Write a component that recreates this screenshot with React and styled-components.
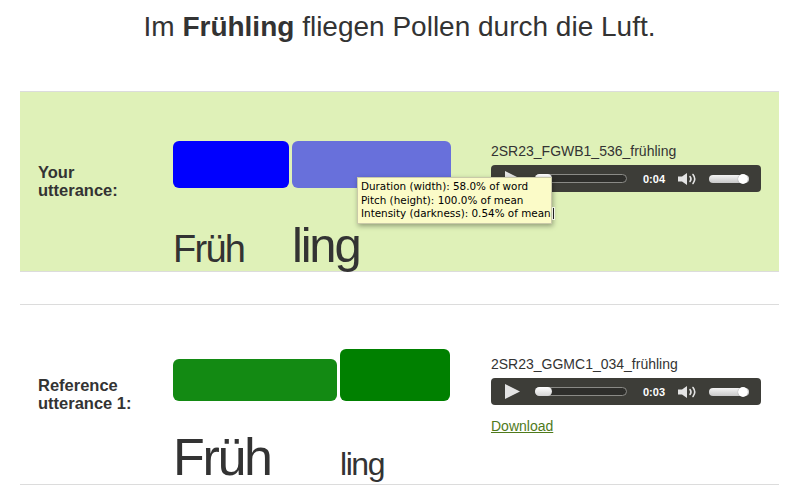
import React from "react";
import styled, { createGlobalStyle } from "styled-components";

const Global = createGlobalStyle`
  html, body { margin: 0; padding: 0; background: #fff; }
  body { font-family: "Liberation Sans", Arial, sans-serif; color: #333; }
`;

const Page = styled.div`
  width: 801px;
  padding: 0 22px 0 20px;
  box-sizing: border-box;
`;

const Title = styled.h1`
  margin: 11px 0 48px;
  font-size: 28px;
  line-height: 32px;
  font-weight: 400;
  text-align: center;
  color: #333;
  b { font-weight: 700; }
`;

const Row = styled.section`
  position: relative;
  height: 181px;
  box-sizing: border-box;
  border-top: 1px solid #dcdcdc;
  border-bottom: 1px solid #dcdcdc;
  background: ${(p) => (p.$highlight ? "#dff1b8" : "transparent")};
  display: grid;
  grid-template-columns: 135px 318px 270px;
  padding-left: 18px;
  & + & { margin-top: 32px; }
`;

const Label = styled.div`
  align-self: center;
  font-size: 16.5px;
  line-height: 18px;
  font-weight: 700;
  color: #333;
  margin-top: -1px;
`;

const Middle = styled.div`
  padding-top: 44px;
`;

const Bars = styled.div`
  height: 52px;
  display: flex;
  align-items: flex-end;
  gap: 3px;
`;

const Bar = styled.div`
  width: ${(p) => p.$w}px;
  height: ${(p) => p.$h}px;
  background: ${(p) => p.$color};
  border-radius: 6px;
`;

const Words = styled.div`
  display: flex;
  align-items: baseline;
  gap: 3px;
  margin-top: ${(p) => p.$top}px;
`;

const Word = styled.div`
  width: ${(p) => p.$w}px;
  font-family: "Liberation Sans", Arial, sans-serif;
  font-size: ${(p) => p.$size}px;
  letter-spacing: -0.045em;
  line-height: 1;
  color: #333;
  white-space: nowrap;
`;

const Right = styled.div`
  padding-top: 51px;
`;

const FileName = styled.div`
  font-size: 14px;
  line-height: 16px;
  color: #333;
`;

const Player = styled.div`
  margin-top: 6px;
  width: 270px;
  height: 27px;
  box-sizing: border-box;
  background: #3d3d38;
  border-radius: 4px;
  display: flex;
  align-items: center;
  padding-left: 14px;
`;

const PlayIcon = styled.svg`
  width: 15px;
  height: 15px;
  flex: none;
`;

const Track = styled.div`
  margin-left: 15px;
  width: 92px;
  height: 9px;
  box-sizing: border-box;
  border: 1px solid #8a8a86;
  border-radius: 5px;
  background: #2e2e2b;
  position: relative;
  flex: none;
`;

const Thumb = styled.div`
  position: absolute;
  left: -1px;
  top: -1px;
  width: 17px;
  height: 9px;
  border-radius: 5px;
  background: linear-gradient(#ffffff, #d4d4d4);
`;

const Time = styled.span`
  margin-left: 16px;
  width: 22px;
  font-size: 11px;
  font-weight: 700;
  color: #fff;
  flex: none;
`;

const Speaker = styled.svg`
  margin-left: 13px;
  width: 22px;
  height: 12px;
  flex: none;
`;

const Volume = styled.div`
  margin-left: 9px;
  width: 40px;
  height: 8px;
  border-radius: 4px;
  background: linear-gradient(#f4f4f4, #c8c8c8);
  position: relative;
  flex: none;
`;

const Knob = styled.div`
  position: absolute;
  right: 1px;
  top: -1px;
  width: 10px;
  height: 10px;
  border-radius: 50%;
  background: #fff;
  box-shadow: 0 0 1px rgba(0, 0, 0, 0.5);
`;

const DownloadLink = styled.a`
  display: inline-block;
  margin-top: 13px;
  font-size: 14px;
  line-height: 16px;
  color: #4f7a1b;
  text-decoration: underline;
`;

const Tooltip = styled.div`
  position: absolute;
  left: 337px;
  top: 85px;
  width: 195px;
  height: 47px;
  box-sizing: border-box;
  padding: 2px 0 0 3px;
  background: #fbfbc8;
  border: 1px solid #c9c9a8;
  box-shadow: 1px 2px 5px rgba(0, 0, 0, 0.35);
  font-family: "DejaVu Sans", sans-serif;
  font-size: 10.4px;
  line-height: 13.6px;
  color: #000;
  white-space: nowrap;
  z-index: 2;
`;

const Cursor = styled.div`
  position: absolute;
  left: 533px;
  top: 116px;
  width: 1px;
  height: 11px;
  background: #222;
  box-shadow: 0 0 0 1px rgba(255, 255, 255, 0.7);
  z-index: 3;
`;

const Play = () => (
  <PlayIcon viewBox="0 0 15 15">
    <polygon points="0,0 15,7.5 0,15" fill="#e4e4e4" />
  </PlayIcon>
);

const SpeakerIcon = () => (
  <Speaker viewBox="0 0 22 12">
    <polygon points="0,3.5 4,3.5 9,0 9,12 4,8.5 0,8.5" fill="#e4e4e4" />
    <path d="M12 3.5 Q14 6 12 8.5" stroke="#e4e4e4" strokeWidth="1.6" fill="none" strokeLinecap="round" />
    <path d="M15 1.5 Q18.5 6 15 10.5" stroke="#e4e4e4" strokeWidth="1.6" fill="none" strokeLinecap="round" />
  </Speaker>
);

const AudioPlayer = ({ time }) => (
  <Player>
    <Play />
    <Track>
      <Thumb />
    </Track>
    <Time>{time}</Time>
    <SpeakerIcon />
    <Volume>
      <Knob />
    </Volume>
  </Player>
);

const rows = [
  {
    label: ["Your", "utterance:"],
    highlight: true,
    file: "2SR23_FGWB1_536_frühling",
    time: "0:04",
    bars: [
      { w: 116, h: 47, color: "#0000ff" },
      { w: 159, h: 47, color: "#6870db" },
    ],
    words: [
      { text: "Früh", size: 38 },
      { text: "ling", size: 49 },
    ],
    download: false,
    tooltip: true,
  },
  {
    label: ["Reference", "utterance 1:"],
    highlight: false,
    file: "2SR23_GGMC1_034_frühling",
    time: "0:03",
    bars: [
      { w: 164, h: 42, color: "#138a13" },
      { w: 110, h: 52, color: "#008000" },
    ],
    words: [
      { text: "Früh", size: 52 },
      { text: "ling", size: 32 },
    ],
    download: true,
  },
];

export default function App() {
  return (
    <>
      <Global />
      <Page>
        <Title>
          Im <b>Frühling</b> fliegen Pollen durch die Luft.
        </Title>
        {rows.map((r, i) => {
          const maxSize = Math.max(...r.words.map((w) => w.size));
          const top = Math.round(171 - 1 - 44 - 52 - 0.8465 * maxSize);
          return (
            <Row key={i} $highlight={r.highlight}>
              <Label>
                {r.label[0]}
                <br />
                {r.label[1]}
              </Label>
              <Middle>
                <Bars>
                  {r.bars.map((b, j) => (
                    <Bar key={j} $w={b.w} $h={b.h} $color={b.color} />
                  ))}
                </Bars>
                <Words $top={top}>
                  {r.words.map((w, j) => (
                    <Word key={j} $w={r.bars[j].w} $size={w.size}>
                      {w.text}
                    </Word>
                  ))}
                </Words>
              </Middle>
              <Right>
                <FileName>{r.file}</FileName>
                <AudioPlayer time={r.time} />
                {r.download && <DownloadLink href="#">Download</DownloadLink>}
              </Right>
              {r.tooltip && (
                <>
                  <Tooltip>
                    Duration (width): 58.0% of word
                    <br />
                    Pitch (height): 100.0% of mean
                    <br />
                    Intensity (darkness): 0.54% of mean
                  </Tooltip>
                  <Cursor />
                </>
              )}
            </Row>
          );
        })}
      </Page>
    </>
  );
}
